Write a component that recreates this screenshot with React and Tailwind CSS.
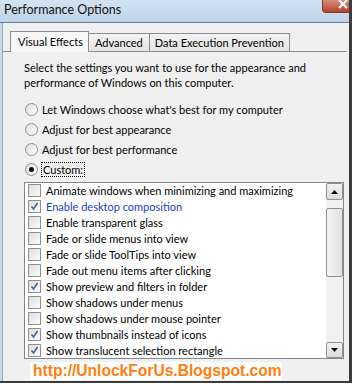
import React from "react";

const font = { fontFamily: 'Lato, "Liberation Sans", sans-serif' };

const effects = [
  { label: "Animate windows when minimizing and maximizing", on: false },
  { label: "Enable desktop composition", on: true, hot: true },
  { label: "Enable transparent glass", on: false },
  { label: "Fade or slide menus into view", on: false },
  { label: "Fade or slide ToolTips into view", on: false },
  { label: "Fade out menu items after clicking", on: false },
  { label: "Show preview and filters in folder", on: true },
  { label: "Show shadows under menus", on: false },
  { label: "Show shadows under mouse pointer", on: false },
  { label: "Show thumbnails instead of icons", on: true },
  { label: "Show translucent selection rectangle", on: true },
];

const choices = [
  "Let Windows choose what's best for my computer",
  "Adjust for best appearance",
  "Adjust for best performance",
];

const Radio = ({ checked }) => (
  <span className="w-[13px] h-[13px] rounded-full border border-[#8e8f8f] bg-gradient-to-br from-[#dcdcdc] to-[#ffffff] flex items-center justify-center shrink-0">
    {checked && <span className="w-[5px] h-[5px] rounded-full bg-[#111]" />}
  </span>
);

const Check = ({ on }) => (
  <span className="w-[13px] h-[13px] border border-[#8f8f8f] bg-gradient-to-br from-[#dedede] to-[#fbfbfb] flex items-center justify-center shrink-0">
    {on && (
      <svg width="9" height="9" viewBox="0 0 9 9">
        <path d="M1.5 4.5 L3.5 7 L7.5 1" fill="none" stroke="#4a5e9a" strokeWidth="1.6" />
      </svg>
    )}
  </span>
);

const Arrow = ({ up }) => (
  <svg width="7" height="4" viewBox="0 0 7 4">
    <path d={up ? "M0 4 L3.5 0 L7 4 Z" : "M0 0 L7 0 L3.5 4 Z"} fill="#000" />
  </svg>
);

const App = () => {
  return (
    <div className="w-[354px] h-[386px] bg-white overflow-hidden" style={font}>
      <div className="w-[352px] h-[383px] flex flex-col border-r-[3px] border-b-[2px] border-[#3c3c3c] overflow-hidden">
        <div className="h-[23px] flex justify-between bg-gradient-to-b from-[#d2e2f2] to-[#bed4ea] border-b border-[#6e7d8f] shrink-0">
          <span className="pl-[4px] pt-[1px] text-[12.5px] leading-[17px] text-[#111] whitespace-nowrap">Performance Options</span>
          <span className="w-[27px] h-[13px] bg-gradient-to-b from-[#d98d7c] to-[#b6402d] rounded-bl-[4px] border-l border-b border-[#7d3a2c] flex justify-end items-start overflow-hidden">
            <svg width="10" height="9" viewBox="0 0 10 9" className="mr-[1px]">
              <path d="M1 0 L9 8 M9 0 L1 8" stroke="#fff" strokeWidth="2.2" />
            </svg>
          </span>
        </div>
        <div className="flex-1 flex bg-[#c9d9ea] pl-[2px] min-h-0">
          <div className="flex-1 flex flex-col bg-[#f0f0f0] border-l border-[#9aa9bc] min-h-0">
            <div className="flex items-end pl-[7px] pt-[7px] text-[11px] leading-[15px] text-black whitespace-nowrap">
              <div className="w-[79px] h-[21px] border border-b-0 border-[#898c95] bg-[#f7f7f7] pl-[7px] pt-[2px] relative top-[1px]">
                Visual Effects
              </div>
              <div className="h-[18px] border-r border-t border-[#898c95] bg-gradient-to-b from-[#f3f3f3] to-[#e3e3e3] px-[6px] pt-[1px]">
                Advanced
              </div>
              <div className="h-[18px] border-r border-t border-[#898c95] bg-gradient-to-b from-[#f3f3f3] to-[#e3e3e3] px-[5px] pt-[1px]">
                Data Execution Prevention
              </div>
            </div>
            <div className="flex-1 border-t border-[#898c95] mr-[2px] pl-[21px] pt-[8px] text-[11px] leading-[15px] text-black whitespace-nowrap">
              <p>
                Select the settings you want to use for the appearance and
                <br />
                performance of Windows on this computer.
              </p>
              <div className="mt-[9px] flex flex-col">
                {choices.map((c) => (
                  <div key={c} className="h-[20px] flex items-center gap-[4px] pl-[1px]">
                    <Radio />
                    <span>{c}</span>
                  </div>
                ))}
                <div className="h-[20px] flex items-center gap-[3px] pl-[1px]">
                  <Radio checked />
                  <span className="border border-dotted border-black px-[1px] leading-[13px]">Custom:</span>
                </div>
              </div>
              <div className="mt-[3px] w-[320px] h-[177px] border border-[#828790] bg-white flex">
                <div className="flex-1 flex flex-col pl-[3px]">
                  {effects.map((e) => (
                    <div key={e.label} className="h-[16px] flex items-center gap-[5px]">
                      <Check on={e.on} />
                      <span className={e.hot ? "text-[#1a3fc4]" : "text-black"}>{e.label}</span>
                    </div>
                  ))}
                </div>
                <div className="w-[17px] flex flex-col bg-[#f1f1f1]">
                  <div className="h-[17px] border border-[#8f8f8f] rounded-[2px] bg-gradient-to-b from-[#f3f3f3] to-[#dcdcdc] flex items-center justify-center">
                    <Arrow up />
                  </div>
                  <div className="mt-[8px] h-[69px] border border-[#8f8f8f] rounded-[2px] bg-gradient-to-r from-[#f4f4f4] to-[#e1e1e1]" />
                  <div className="flex-1" />
                  <div className="h-[16px] border border-[#8f8f8f] rounded-[2px] bg-gradient-to-b from-[#f3f3f3] to-[#dcdcdc] flex items-center justify-center">
                    <Arrow />
                  </div>
                </div>
              </div>
              <div className="mt-[3px] ml-[6px] w-[252px] h-[18px] bg-white flex items-center pl-[3px]">
                <span
                  className="text-[15.6px] leading-[18px] font-bold text-[#ff7f0f]"
                  style={{ fontFamily: '"Liberation Sans", Arial, sans-serif' }}
                >
                  http://UnlockForUs.Blogspot.com
                </span>
              </div>
            </div>
          </div>
        </div>
      </div>
    </div>
  );
};

export default App;
